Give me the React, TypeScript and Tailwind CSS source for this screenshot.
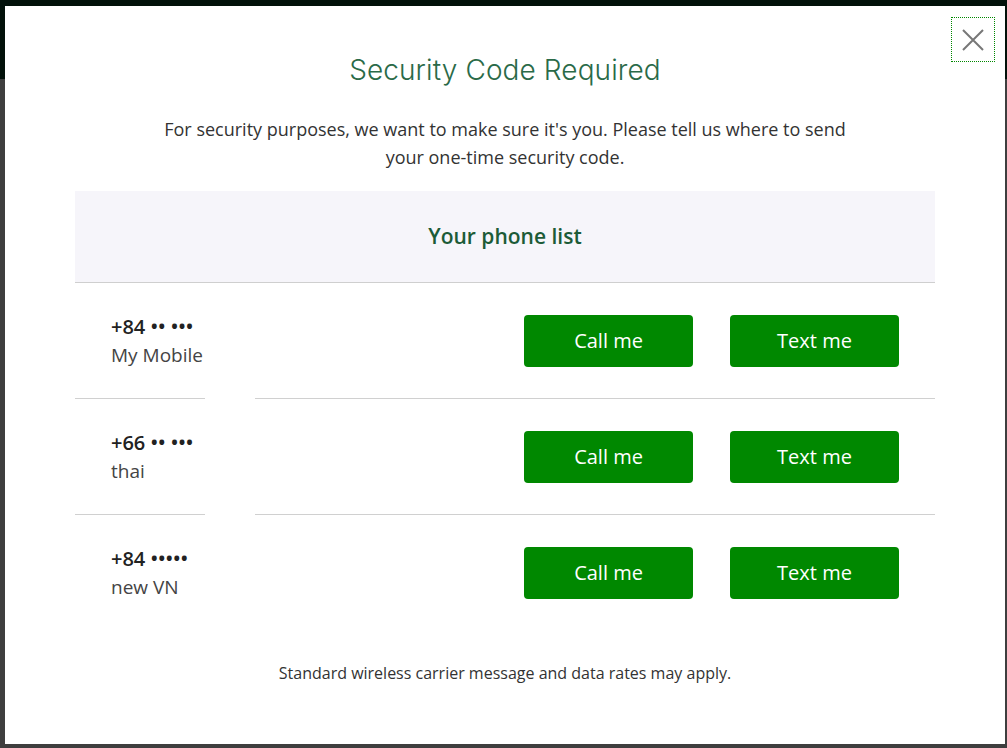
const phones = [
  { number: '+84 •• •••', label: 'My Mobile' },
  { number: '+66 •• •••', label: 'thai' },
  { number: '+84 •••••', label: 'new VN' },
]

const segoe = { fontFamily: '"Open Sans", "Noto Sans", sans-serif' }

function Divider() {
  return (
    <div className="flex h-px">
      <div className="w-[130px] bg-[#d0d0d0]" />
      <div className="w-[50px]" />
      <div className="flex-1 bg-[#d0d0d0]" />
    </div>
  )
}

export default function App() {
  return (
    <div className="w-[1007px] h-[748px] overflow-hidden bg-[#3e3e3e] flex flex-col">
      {/* page behind the modal */}
      <div className="h-[79px] bg-[#02110a] shrink-0" />
      <div className="flex-1" />

      {/* modal */}
      <div className="fixed left-[5px] top-[6px] w-[1000px] h-[738px] bg-white" style={segoe}>
        <button className="absolute left-[946px] top-[11px] w-[44px] h-[45px] border border-dotted border-[#008800] flex items-center justify-center text-[#777]">
          <svg width="24" height="24" viewBox="0 0 24 24" fill="none" stroke="currentColor" strokeWidth="2">
            <path d="M2 2l20 20M22 2L2 22" />
          </svg>
        </button>

        <div className="flex flex-col items-center pt-[44px]">
          <h1
            className="text-[28px] leading-[40px] font-light text-[#2a6a48] tracking-[0.1px]"
            style={{ fontFamily: 'Inter, Lato, sans-serif' }}
          >
            Security Code Required
          </h1>
          <p className="mt-[25px] w-[700px] text-center text-[18px] leading-[28px] text-[#333]">
            For security purposes, we want to make sure it's you. Please tell us where to send your one-time security code.
          </p>
        </div>

        <div className="mx-[70px] mt-[20px]">
          <div className="h-[92px] bg-[#f6f5fa] border-b border-[#cfcfcf] flex items-center justify-center">
            <span className="text-[21px] font-semibold text-[#1c5b37]">Your phone list</span>
          </div>

          {phones.map((p, i) => (
            <div key={i}>
              <div className="h-[115px] flex items-center pl-[36px] pr-[36px]">
                <div className="flex flex-col">
                  <span className="text-[20px] leading-[28px] font-semibold text-[#222]">{p.number}</span>
                  <span className="text-[19px] leading-[28px] text-[#444]">{p.label}</span>
                </div>
                <div className="ml-auto flex gap-[37px]">
                  <button className="w-[169px] h-[52px] rounded-[4px] bg-[#008800] text-white text-[20px]">
                    Call me
                  </button>
                  <button className="w-[169px] h-[52px] rounded-[4px] bg-[#008800] text-white text-[20px]">
                    Text me
                  </button>
                </div>
              </div>
              {i < phones.length - 1 && <Divider />}
            </div>
          ))}
        </div>

        <p className="mt-[31px] text-center text-[16px] text-[#333]">
          Standard wireless carrier message and data rates may apply.
        </p>
      </div>
    </div>
  )
}
